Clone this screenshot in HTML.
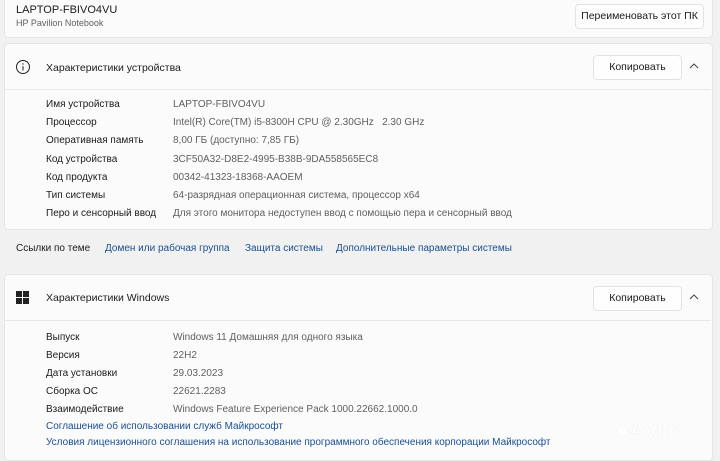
<!DOCTYPE html><html><head><meta charset="utf-8"><style>
body{margin:0;width:720px;height:457px;background:#f1f1f1;font-family:"Liberation Sans",sans-serif;color:#1b1b1b;position:relative;overflow:hidden;font-size:10px}
.a{position:absolute;white-space:nowrap}
.card{position:absolute;left:4px;width:707px;background:#fbfbfb;border:1px solid #e6e6e6;border-radius:4px}
.btn{position:absolute;background:#fefefe;border:1px solid #e2e2e2;border-radius:4px;font-size:10.5px;text-align:center}
.v{color:#5f5f5f}
.l{color:#1a4f8f}
</style></head><body>
<div class="card" style="top:-4px;height:40px"></div>
<div class="a" style="left:16px;top:4px;font-size:11px">LAPTOP-FBIVO4VU</div>
<div class="a" style="left:16px;top:18px;font-size:9px;color:#5f5f5f">HP Pavilion Notebook</div>
<div class="btn" style="left:575px;top:4px;width:127px;height:23px;line-height:23px">Переименовать этот ПК</div>

<div class="card" style="top:43px;height:185px"></div>
<div class="a" style="left:5px;top:89px;width:706px;border-top:1px solid #e8e8e8"></div>
<svg class="a" style="left:15px;top:59px" width="16" height="16"><circle cx="8" cy="8" r="6.5" fill="none" stroke="#222" stroke-width="1"/><line x1="8" y1="7" x2="8" y2="11.5" stroke="#222"/><circle cx="8" cy="5" r=".7" fill="#222"/></svg>
<div class="a" style="left:46px;top:62px;font-size:10.5px">Характеристики устройства</div>
<div class="btn" style="left:593px;top:55px;width:87px;height:23px;line-height:23px">Копировать</div>
<svg class="a" style="left:689px;top:62px" width="10" height="8"><path d="M1 6 L5 2 L9 6" fill="none" stroke="#444" stroke-width="1"/></svg>

<div class="a" style="left:46px;top:96px;line-height:18.2px">Имя устройства<br>Процессор<br>Оперативная память<br>Код устройства<br>Код продукта<br>Тип системы<br>Перо и сенсорный ввод</div>
<div class="a v" style="left:173px;top:96px;line-height:18.2px">LAPTOP-FBIVO4VU<br>Intel(R) Core(TM) i5-8300H CPU @ 2.30GHz &nbsp; 2.30 GHz<br>8,00 ГБ (доступно: 7,85 ГБ)<br>3CF50A32-D8E2-4995-B38B-9DA558565EC8<br>00342-41323-18368-AAOEM<br>64-разрядная операционная система, процессор x64<br>Для этого монитора недоступен ввод с помощью пера и сенсорный ввод</div>

<div class="a" style="left:16px;top:243px">Ссылки по теме</div>
<div class="a l" style="left:105px;top:243px">Домен или рабочая группа</div>
<div class="a l" style="left:245px;top:243px">Защита системы</div>
<div class="a l" style="left:336px;top:243px">Дополнительные параметры системы</div>

<div class="card" style="top:274px;height:185px"></div>
<div class="a" style="left:5px;top:320px;width:706px;border-top:1px solid #e8e8e8"></div>
<svg class="a" style="left:16px;top:291px" width="14" height="14"><rect x="0" y="0" width="6" height="6" fill="#222"/><rect x="7" y="0" width="6" height="6" fill="#222"/><rect x="0" y="7" width="6" height="6" fill="#222"/><rect x="7" y="7" width="6" height="6" fill="#222"/></svg>
<div class="a" style="left:46px;top:292px;font-size:10.5px">Характеристики Windows</div>
<div class="btn" style="left:593px;top:286px;width:87px;height:23px;line-height:23px">Копировать</div>
<svg class="a" style="left:689px;top:293px" width="10" height="8"><path d="M1 6 L5 2 L9 6" fill="none" stroke="#444" stroke-width="1"/></svg>

<div class="a" style="left:46px;top:329px;line-height:18px">Выпуск<br>Версия<br>Дата установки<br>Сборка ОС<br>Взаимодействие</div>
<div class="a v" style="left:173px;top:329px;line-height:18px">Windows 11 Домашняя для одного языка<br>22H2<br>29.03.2023<br>22621.2283<br>Windows Feature Experience Pack 1000.22662.1000.0</div>
<div class="a l" style="left:46px;top:419px;line-height:16px">Соглашение об использовании служб Майкрософт<br>Условия лицензионного соглашения на использование программного обеспечения корпорации Майкрософт</div>
<div class="a" style="left:615px;top:417px;font-size:24px;color:#fff;opacity:.9;text-shadow:0 0 1px #d8d8d8">●Avito</div>
</body></html>
